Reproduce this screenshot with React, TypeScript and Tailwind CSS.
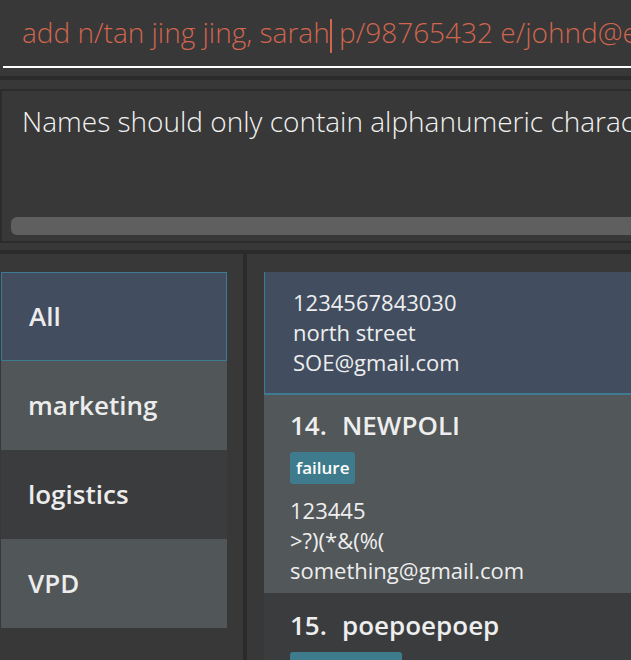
import React from "react";

const groups = ["All", "marketing", "logistics", "VPD"];

function GroupItem({ label, i }: { label: string; i: number }) {
  const selected = i === 0;
  const bg = selected
    ? "bg-[#424d5f] border border-[#3e7b91]"
    : i % 2 === 1
      ? "bg-[#515658]"
      : "bg-[#3b3c3e]";
  return (
    <div className={`h-[89px] flex items-center pl-[27px] ${bg}`}>
      <span className="text-[26px] font-semibold text-[#ececec]">{label}</span>
    </div>
  );
}

function Tag({ text, wide }: { text: string; wide?: boolean }) {
  return (
    <span
      className={`inline-flex items-center h-[32px] rounded-[3px] bg-[#3e7b8c] px-[6px] text-[17px] font-semibold text-white ${wide ? "w-[112px]" : ""}`}
    >
      {text}
    </span>
  );
}

export default function App() {
  return (
    <main
      className="w-[631px] h-[660px] overflow-hidden bg-[#383838] flex flex-col"
      style={{ fontFamily: '"Open Sans", "Noto Sans", sans-serif' }}
    >
      {/* command box */}
      <div className="h-[66px] pl-[22px] pt-[12px] whitespace-nowrap overflow-hidden">
        <span className="text-[28px] font-light text-[#d2654e] leading-[40px]">
          add n/tan jing jing, sarah
          <span className="inline-block w-[2px] h-[34px] bg-[#d2654e] align-middle" />
          {" "}p/98765432 e/johnd@example.com
        </span>
      </div>
      <div className="h-[2px] ml-[3px] bg-white" />
      <div className="h-[8px]" />
      <div className="h-[4px] bg-[#2b2b2b]" />
      <div className="h-[9px]" />

      {/* result box */}
      <div className="h-[154px] border-2 border-r-0 border-[#2c2c2c] flex flex-col">
        <div className="h-[126px] pl-[20px] pt-[10px] whitespace-nowrap overflow-hidden">
          <span className="text-[28px] font-light text-[#f2f2f2] leading-[40px]">
            Names should only contain alphanumeric characters and spaces, and it should not be blank
          </span>
        </div>
        <div className="h-[18px] ml-[9px] rounded-l-[6px] bg-[#5f5f5f]" />
      </div>
      <div className="h-[7px]" />
      <div className="h-[4px] bg-[#2b2b2b]" />

      {/* panels */}
      <div className="flex-1 flex min-h-0">
        <div className="w-[243px] pt-[18px] pl-[1px] pr-[16px] flex flex-col">
          {groups.map((g, i) => (
            <GroupItem key={g} label={g} i={i} />
          ))}
        </div>
        <div className="w-[4px] bg-[#2b2b2b]" />
        <div className="flex-1 pt-[18px] pl-[17px] flex flex-col overflow-hidden">
          <div className="h-[123px] shrink-0 bg-[#424d5f] border-l border-b-2 border-[#3e7b91] pl-[28px] pt-[15px] text-[22px] leading-[30px] text-[#eeeeee] whitespace-nowrap">
            <div>1234567843030</div>
            <div>north street</div>
            <div>SOE@gmail.com</div>
          </div>
          <div className="h-[198px] shrink-0 bg-[#525759] pl-[26px] pt-[12px] text-[#eeeeee] whitespace-nowrap">
            <div className="text-[26px] font-semibold leading-[36px] flex">
              <span className="w-[52px]">14.</span>
              <span>NEWPOLI</span>
            </div>
            <div className="mt-[9px]">
              <Tag text="failure" />
            </div>
            <div className="mt-[11px] text-[22px] leading-[30px]">
              <div>123445</div>
              <div>&gt;?)(*&amp;(%(</div>
              <div>something@gmail.com</div>
            </div>
          </div>
          <div className="flex-1 shrink-0 bg-[#3b3c3e] pl-[26px] pt-[14px] text-[#eeeeee] whitespace-nowrap">
            <div className="text-[26px] font-semibold leading-[36px] flex">
              <span className="w-[52px]">15.</span>
              <span>poepoepoep</span>
            </div>
            <div className="mt-[9px]">
              <Tag text="marketing" wide />
            </div>
          </div>
        </div>
      </div>
    </main>
  );
}
